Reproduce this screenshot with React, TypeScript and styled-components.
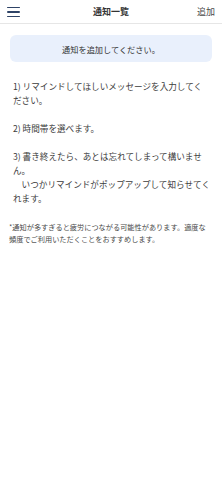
import React from "react";
import styled, { createGlobalStyle } from "styled-components";

const Global = createGlobalStyle`
  html, body { margin: 0; padding: 0; background: #ffffff; }
  body { font-family: "Noto Sans CJK JP", "Noto Sans", sans-serif; -webkit-font-smoothing: antialiased; }
  * { box-sizing: border-box; }
`;

const Page = styled.div`
  width: 222px;
  min-height: 480px;
  background: #ffffff;
  display: flex;
  flex-direction: column;
`;

const Header = styled.header`
  height: 24px;
  display: grid;
  grid-template-columns: 40px 1fr 40px;
  align-items: center;
  border-bottom: 1px solid #e6e6e6;
  padding: 0 7px;
`;

const MenuButton = styled.button`
  width: 13px;
  height: 10px;
  padding: 0;
  border: 0;
  background: none;
  display: flex;
  flex-direction: column;
  justify-content: space-between;
  margin-top: 1px;
`;

const MenuLine = styled.span`
  display: block;
  height: 1.4px;
  width: 13px;
  background: #2e4366;
  border-radius: 1px;
`;

const Title = styled.h1`
  margin: 0;
  text-align: center;
  font-size: 9px;
  font-weight: 700;
  color: #333333;
`;

const AddButton = styled.span`
  text-align: right;
  font-size: 9px;
  color: #4a4a4a;
`;

const Content = styled.main`
  display: flex;
  flex-direction: column;
  padding: 10px 10px 0;
`;

const Notice = styled.div`
  height: 27px;
  margin-top: 1px;
  background: #e9f0fc;
  border-radius: 6px;
  display: flex;
  align-items: center;
  justify-content: center;
  font-size: 8.2px;
  color: #333333;
`;

const Steps = styled.p`
  margin: 17px 0 0;
  padding: 0 0 0 3px;
  font-size: 8.6px;
  line-height: 14px;
  color: #3c3c3c;
  white-space: pre;
`;

const Footnote = styled.p`
  margin: 16px 0 0 -1px;
  padding: 0;
  font-size: 7.2px;
  line-height: 12px;
  color: #4a4a4a;
  white-space: pre;
`;

const steps =
  "1) リマインドしてほしいメッセージを入力してく\nださい。\n\n2) 時間帯を選べます。\n\n3) 書き終えたら、あとは忘れてしまって構いませ\nん。\n\u3000いつかリマインドがポップアップして知らせてく\nれます。";

const note =
  "*通知が多すぎると疲労につながる可能性があります。適度な\n頻度でご利用いただくことをおすすめします。";

export default function App() {
  return (
    <Page>
      <Global />
      <Header>
        <MenuButton aria-label="menu">
          <MenuLine />
          <MenuLine />
          <MenuLine />
        </MenuButton>
        <Title>通知一覧</Title>
        <AddButton>追加</AddButton>
      </Header>
      <Content>
        <Notice>通知を追加してください。</Notice>
        <Steps>{steps}</Steps>
        <Footnote>{note}</Footnote>
      </Content>
    </Page>
  );
}
